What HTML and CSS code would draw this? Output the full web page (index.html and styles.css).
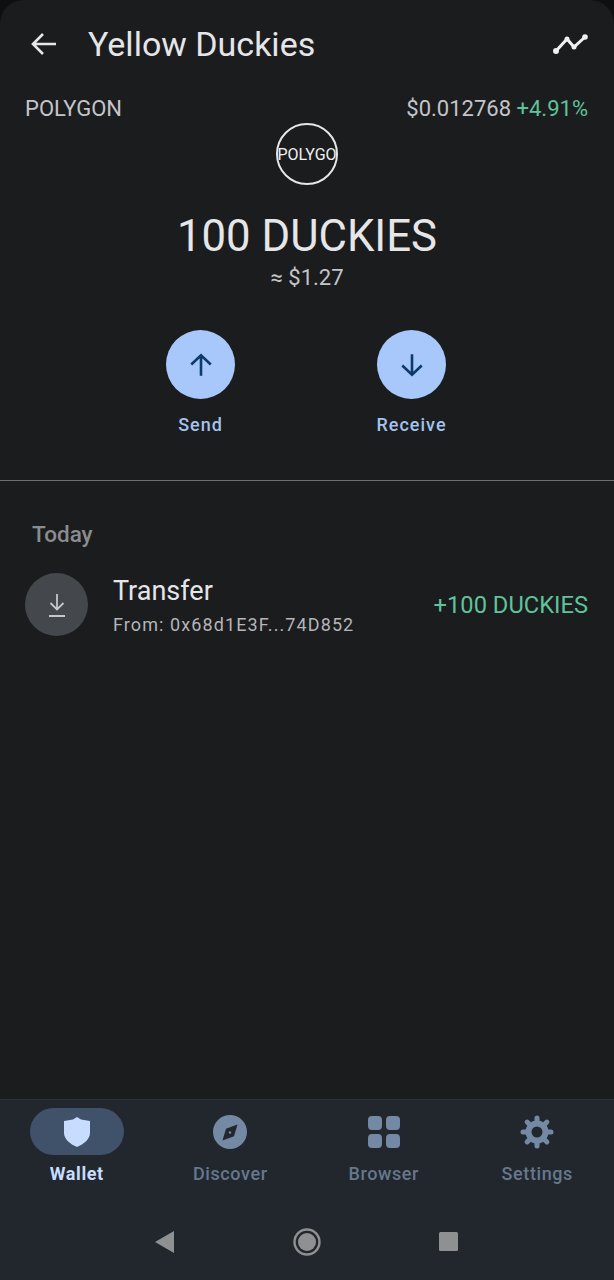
FILE: index.html
```html
<!DOCTYPE html>
<html lang="en">
<head>
  <meta charset="UTF-8">
  <meta name="viewport" content="width=device-width, initial-scale=1.0">
  <title>Yellow Duckies</title>
  <link rel="stylesheet" href="styles.css">
</head>
<body>
<div class="screen">
  <header class="top-bar">
    <svg class="back-icon" viewBox="0 0 28 24" width="28" height="24"><path d="M26 12H3M13 2L3 12l10 10" fill="none" stroke="#e6e6e8" stroke-width="2.6"/></svg>
    <h1 class="title">Yellow Duckies</h1>
    <svg class="chart-icon" viewBox="0 -6 36 22" width="36" height="22"><path d="M4 12L15 0l7 8L33 -2" fill="none" stroke="#f0f0f2" stroke-width="3"/><circle cx="4" cy="12" r="3" fill="#f0f0f2"/><circle cx="15" cy="0" r="2.500" fill="#f0f0f2"/><circle cx="22" cy="8" r="2.500" fill="#f0f0f2"/><circle cx="33" cy="-2" r="2.800" fill="#f0f0f2"/></svg>
  </header>

  <div class="price-row">
    <span>POLYGON</span>
    <span>$0.012768 <span class="green">+4.91%</span></span>
  </div>

  <div class="coin"><span class="coin-text">POLYGO</span></div>
  <div class="balance">100 DUCKIES</div>
  <div class="fiat">≈ $1.27</div>

  <div class="actions">
    <div class="action">
      <div class="action-btn">
        <svg viewBox="0 0 24 24" width="26" height="26"><path d="M12 22V3M3 11.500L12 3l9 8.500" fill="none" stroke="#0b3a6b" stroke-width="2.400"/></svg>
      </div>
      <span class="action-label">Send</span>
    </div>
    <div class="action">
      <div class="action-btn">
        <svg viewBox="0 0 24 24" width="26" height="26"><path d="M12 2v19M3 12.500L12 21l9-8.500" fill="none" stroke="#0b3a6b" stroke-width="2.400"/></svg>
      </div>
      <span class="action-label">Receive</span>
    </div>
  </div>

  <hr class="divider">

  <main class="activity">
    <div class="day">Today</div>
    <div class="tx">
      <div class="tx-icon">
        <svg viewBox="0 0 20 26" width="20" height="26"><path d="M10 2v15M3.500 11l6.500 6.500 6.500-6.500M2 24h16" fill="none" stroke="#c6c7ca" stroke-width="1.800"/></svg>
      </div>
      <div class="tx-info">
        <div class="tx-title">Transfer</div>
        <div class="tx-from">From: 0x68d1E3F...74D852</div>
      </div>
      <div class="tx-amount">+100 DUCKIES</div>
    </div>
  </main>

  <footer class="bottom">
    <nav class="tabs">
      <div class="tab active">
        <div class="pill">
          <svg viewBox="0 0 26 30" width="26" height="30"><path d="M13 0l4 2.500 9 1.500v12c0 6-6 11-13 14C6 27 0 22 0 16V4l9-1.500z" fill="#c7dcff"/></svg>
        </div>
        <span>Wallet</span>
      </div>
      <div class="tab">
        <div class="pill">
          <svg viewBox="0 0 34 34" width="34" height="34"><circle cx="17" cy="17" r="17" fill="#7389a4"/><path d="M24.500 9.500L21 21.300 9.500 25.500 13 13.700z" fill="#23282f"/><circle cx="17" cy="17.500" r="1.200" fill="#7389a4"/></svg>
        </div>
        <span>Discover</span>
      </div>
      <div class="tab">
        <div class="pill">
          <svg viewBox="0 0 32 32" width="32" height="32"><rect x="0" y="0" width="14" height="14" rx="4" fill="#7389a4"/><rect x="18" y="0" width="14" height="14" rx="4" fill="#7389a4"/><rect x="0" y="18" width="14" height="14" rx="4" fill="#7389a4"/><rect x="18" y="18" width="14" height="14" rx="4" fill="#7389a4"/></svg>
        </div>
        <span>Browser</span>
      </div>
      <div class="tab">
        <div class="pill">
          <svg viewBox="0 0 34 34" width="34" height="34">
            <g stroke="#7389a4" stroke-width="5" stroke-linecap="round">
              <path d="M3 17h28M17 3v28M7.100 7.100l19.800 19.800M26.900 7.100L7.100 26.900"/>
            </g>
            <circle cx="17" cy="17" r="11.500" fill="#7389a4"/>
            <circle cx="17" cy="17" r="5.500" fill="#22272e"/>
          </svg>
        </div>
        <span>Settings</span>
      </div>
    </nav>
    <div class="sys-nav">
      <svg viewBox="0 0 20 22" width="20" height="22"><path d="M0 11L19 0v22z" fill="#8f9092"/></svg>
      <svg viewBox="0 0 28 28" width="28" height="28"><circle cx="14" cy="14" r="12.500" fill="none" stroke="#8f9092" stroke-width="2.400"/><circle cx="14" cy="14" r="9" fill="#8f9092"/></svg>
      <svg viewBox="0 0 20 20" width="20" height="20"><rect width="19" height="19" rx="1.500" fill="#8f9092"/></svg>
    </div>
  </footer>
</div>
</body>
</html>
```
FILE: styles.css
```css
* {
  box-sizing: border-box;
}

html, body {
  margin: 0;
  padding: 0;
  background: #0e0f10;
}

body {
  font-family: Roboto, "Liberation Sans", sans-serif;
  color: #e6e6e8;
}

.screen {
  width: 614px;
  height: 1280px;
  background: #1b1c1e;
  border-radius: 24px 24px 0 0;
  display: flex;
  flex-direction: column;
  overflow: hidden;
}

.top-bar {
  display: flex;
  align-items: center;
  height: 88px;
  padding: 0 26px 0 30px;
}

.title {
  flex: 1;
  margin: 0 0 0 30px;
  font-size: 34px;
  font-weight: 400;
  color: #e6e6e8;
}

.price-row {
  display: flex;
  justify-content: space-between;
  padding: 0 26px 0 25px;
  font-size: 22px;
  line-height: 26px;
  margin-top: 8px;
  color: #c4c5c8;
}

.green {
  color: #5fc39b;
}

.coin {
  width: 62px;
  height: 62px;
  margin: 1px auto 0;
  border: 2px solid #e6e6e8;
  border-radius: 50%;
  display: flex;
  align-items: center;
  justify-content: center;
}

.coin-text {
  font-size: 16px;
  color: #f0f0f2;
  white-space: nowrap;
}

.balance {
  margin-top: 26px;
  text-align: center;
  font-size: 43.700px;
  line-height: 50px;
  color: #e6e6e8;
}

.fiat {
  margin-top: 4px;
  text-align: center;
  font-size: 22px;
  line-height: 26px;
  color: #c4c5c8;
}

.actions {
  display: flex;
  justify-content: center;
  gap: 141px;
  margin-top: 39px;
  padding-right: 2px;
}

.action {
  display: flex;
  flex-direction: column;
  align-items: center;
  width: 70px;
}

.action-btn {
  width: 69px;
  height: 69px;
  border-radius: 50%;
  background: #a8c8fb;
  display: flex;
  align-items: center;
  justify-content: center;
}

.action-label {
  margin-top: 15px;
  font-size: 18px;
  line-height: 22px;
  font-weight: 500;
  letter-spacing: 1px;
  color: #a3c2ee;
  white-space: nowrap;
}

.divider {
  width: 100%;
  margin: 44px 0 0;
  border: 0;
  border-top: 1px solid #6f7072;
}

.activity {
  flex: 1;
  padding: 40px 26px 0 25px;
}

.day {
  margin-left: 7px;
  font-size: 22.500px;
  line-height: 26px;
  font-weight: 500;
  color: #8b8c8f;
}

.tx {
  display: flex;
  align-items: center;
  margin-top: 26px;
}

.tx-icon {
  width: 63px;
  height: 63px;
  border-radius: 50%;
  background: #44474c;
  display: flex;
  align-items: center;
  justify-content: center;
}

.tx-info {
  flex: 1;
  margin-left: 25px;
}

.tx-title {
  font-size: 27px;
  line-height: 37px;
  color: #e6e6e8;
}

.tx-from {
  margin-top: 3px;
  font-size: 18px;
  line-height: 23px;
  letter-spacing: 1.100px;
  color: #b4b5b8;
}

.tx-amount {
  font-size: 23.700px;
  color: #5fc39b;
}

.bottom {
  height: 181px;
  background: #22272e;
  border-top: 1px solid #2a3038;
}

.tabs {
  display: flex;
  padding: 8px 0 0;
}

.tab {
  flex: 1;
  display: flex;
  flex-direction: column;
  align-items: center;
  font-size: 18px;
  font-weight: 500;
  letter-spacing: 0.6px;
  color: #66788d;
}

.tab span {
  margin-top: 7px;
  line-height: 24px;
}

.pill {
  width: 94px;
  height: 47px;
  border-radius: 24px;
  display: flex;
  align-items: center;
  justify-content: center;
}

.tab.active .pill {
  background: #3f5269;
}

.tab.active {
  color: #c7dcff;
  font-weight: 700;
}

.sys-nav {
  display: flex;
  align-items: center;
  justify-content: center;
  gap: 118px;
  margin-top: 42px;
}
```
